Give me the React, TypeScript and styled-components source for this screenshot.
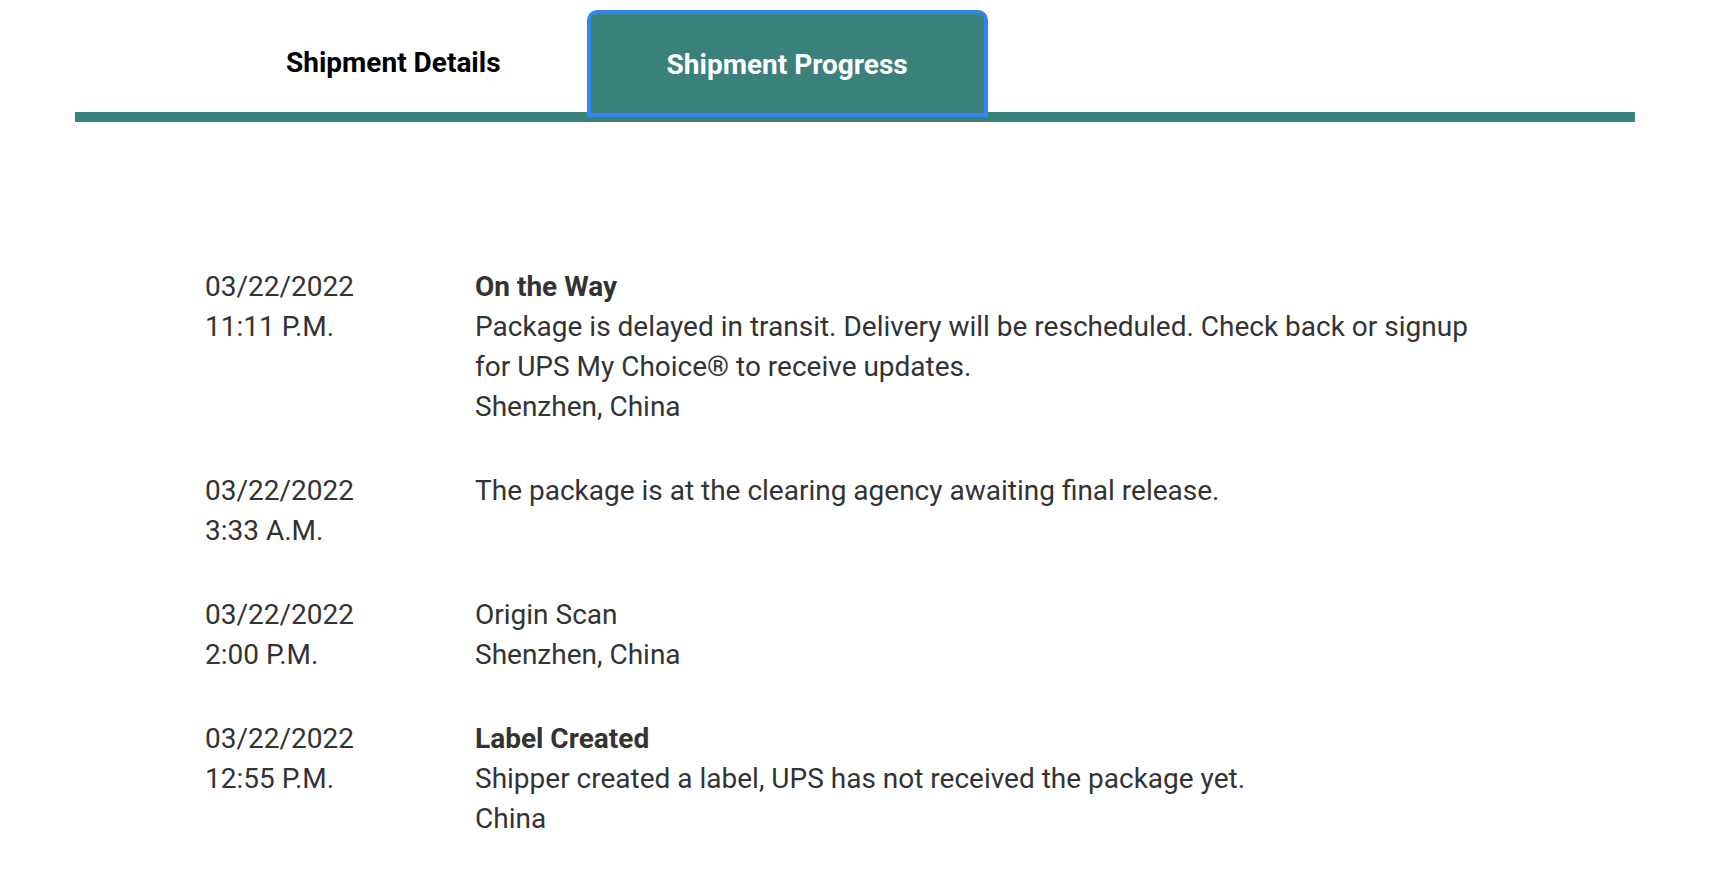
import styled, { createGlobalStyle } from "styled-components";

const GlobalStyle = createGlobalStyle`
  body {
    margin: 0;
    background: #fff;
    font-family: Roboto, "Liberation Sans", Arial, sans-serif;
  }
`;

type Activity = {
  date: string;
  time: string;
  title?: string;
  lines: string[];
};

const activities: Activity[] = [
  {
    date: "03/22/2022",
    time: "11:11 P.M.",
    title: "On the Way",
    lines: [
      "Package is delayed in transit. Delivery will be rescheduled. Check back or signup for UPS My Choice® to receive updates.",
      "Shenzhen, China",
    ],
  },
  {
    date: "03/22/2022",
    time: "3:33 A.M.",
    lines: ["The package is at the clearing agency awaiting final release."],
  },
  {
    date: "03/22/2022",
    time: "2:00 P.M.",
    lines: ["Origin Scan", "Shenzhen, China"],
  },
  {
    date: "03/22/2022",
    time: "12:55 P.M.",
    title: "Label Created",
    lines: ["Shipper created a label, UPS has not received the package yet.", "China"],
  },
];

export default () => {
  return (
    <Page>
      <GlobalStyle />
      <TabBar>
        <Tab>Shipment Details</Tab>
        <Tab $active>Shipment Progress</Tab>
      </TabBar>
      <Timeline>
        {activities.map((a, i) => (
          <Row key={i}>
            <When>
              <div>{a.date}</div>
              <div>{a.time}</div>
            </When>
            <What>
              {a.title && <Title>{a.title}</Title>}
              {a.lines.map((l, j) => (
                <div key={j}>{l}</div>
              ))}
            </What>
          </Row>
        ))}
      </Timeline>
    </Page>
  );
};

const Page = styled.div`
  width: 1560px;
  margin-left: 75px;
  padding-top: 10px;
`;

const TabBar = styled.div`
  display: flex;
  align-items: flex-end;
  padding-left: 123px;
  height: 102px;
  border-bottom: 10px solid #3b817b;
`;

const Tab = styled.button<{ $active?: boolean }>`
  box-sizing: border-box;
  height: ${(p) => (p.$active ? "107px" : "102px")};
  margin-bottom: ${(p) => (p.$active ? "-5px" : "0")};
  padding: ${(p) => (p.$active ? "2px 76px 0" : "3px 86px 0 88px")};
  font-family: Roboto, "Liberation Sans", Arial, sans-serif;
  font-size: 28px;
  font-weight: 700;
  color: ${(p) => (p.$active ? "#fff" : "#000")};
  background: ${(p) => (p.$active ? "#3b817b" : "transparent")};
  border: ${(p) => (p.$active ? "4px solid #3384f5" : "none")};
  border-radius: 10px 10px 0 0;
  cursor: pointer;
`;

const Timeline = styled.div`
  padding: 145px 0 0 130px;
  font-size: 28px;
  line-height: 40px;
  color: #333;
`;

const Row = styled.div`
  display: flex;
  margin-bottom: 44px;
`;

const When = styled.div`
  width: 270px;
  flex-shrink: 0;
`;

const What = styled.div`
  width: 1010px;
`;

const Title = styled.div`
  font-weight: 700;
`;
